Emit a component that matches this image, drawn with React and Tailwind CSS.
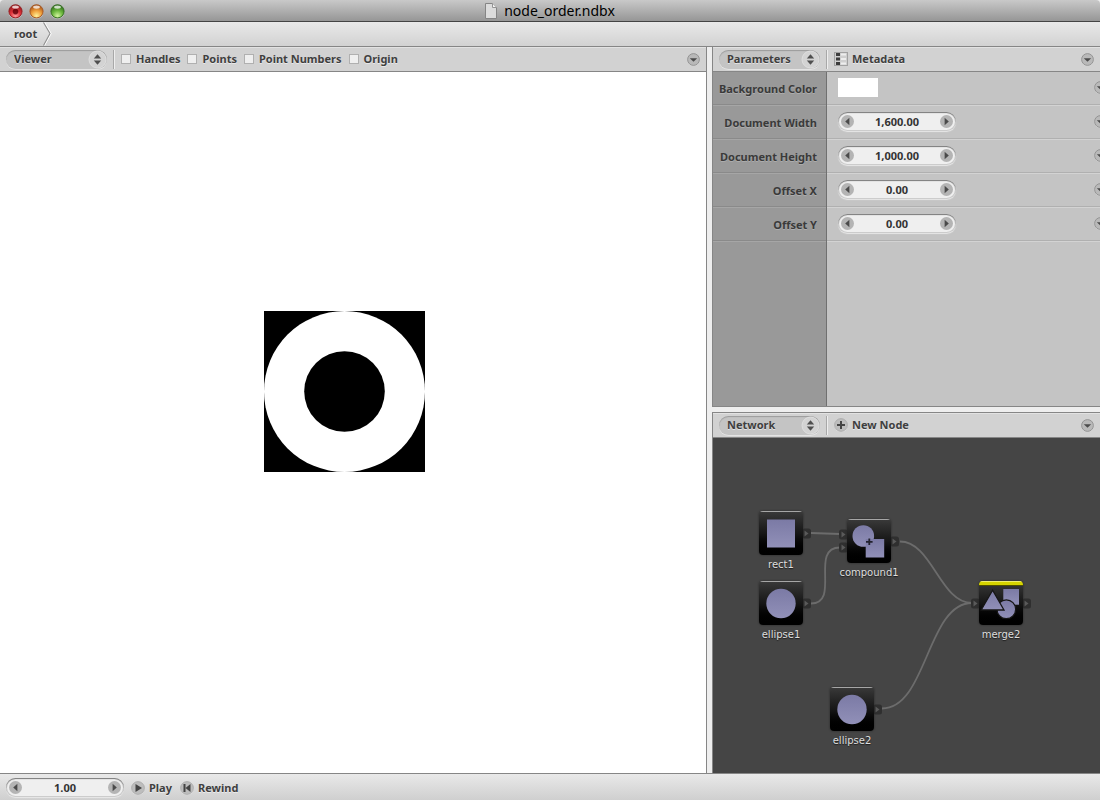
import React from "react";

const EMBOSS = "[text-shadow:0_1px_0_rgba(255,255,255,0.55)]";

function TrafficLight({ label, outer, inner, glow, dot }) {
  const id = "light-" + label;
  return (
    <button type="button" aria-label={label} className="block size-[15px]">
      <svg viewBox="0 0 15 15" className="block size-[15px]">
        <defs>
          <radialGradient id={id} cx="0.5" cy="0.85" r="0.8">
            <stop offset="0" stopColor={glow} />
            <stop offset="0.5" stopColor={inner} />
            <stop offset="1" stopColor={outer} />
          </radialGradient>
        </defs>
        <circle cx="7.5" cy="8" r="7" fill="#ffffff" opacity="0.35" />
        <circle cx="7.5" cy="7.3" r="6.6" fill={`url(#${id})`} stroke={outer} strokeWidth="0.9" />
        <ellipse cx="7.5" cy="3.1" rx="3.4" ry="1.7" fill="#ffffff" opacity="0.75" />
        {dot && <circle cx="7.5" cy="7.6" r="2.8" fill="#5e0008" opacity="0.8" />}
      </svg>
    </button>
  );
}

function PaneSelect({ label }) {
  return (
    <div className="relative flex h-[19px] w-[101px] shrink-0">
      <select
        aria-label={label + " pane"}
        className={"block h-[19px] w-full appearance-none rounded-full bg-[#c4c4c4] pr-6 pl-2 text-[11px] leading-4 font-bold text-[#3f3f3f] shadow-[inset_0_1px_1px_#9c9c9c,0_1px_0_#e4e4e4] outline-none " + EMBOSS}
      >
        <option>{label}</option>
      </select>
      <svg viewBox="0 0 19 19" className="pointer-events-none absolute top-0 right-0 size-[19px]">
        <circle cx="9.5" cy="9.5" r="8.5" fill="#d3d3d3" stroke="#dfdfdf" />
        <path d="M5.8 8.5 9.5 4.3 13.2 8.5ZM5.8 10.5 9.5 14.7 13.2 10.5Z" fill="#4f4f4f" />
      </svg>
    </div>
  );
}

function MenuButton({ label, className = "" }) {
  return (
    <button type="button" aria-label={label} className={"block size-[13px] shrink-0 " + className}>
      <svg viewBox="0 0 13 13" className="block size-[13px]">
        <circle cx="6.5" cy="7" r="6" fill="#e2e2e2" />
        <circle cx="6.5" cy="6.5" r="5.9" fill="#b9b9b9" stroke="#8e8e8e" strokeWidth="0.9" />
        <path d="M2.8 5.2H10.2L6.5 8.8Z" fill="#4c4c4c" />
      </svg>
    </button>
  );
}

function Divider() {
  return <div className="h-[19px] w-[2px] shrink-0 border-r border-[#eeeeee] bg-[#a8a8a8]" />;
}

function PaneHeader({ title, children }) {
  return (
    <header className="flex h-[25px] shrink-0 items-center border-b border-[#868686] bg-[#d2d2d2] pr-[6px] pl-[6px] shadow-[inset_0_1px_0_#e2e2e2]">
      <PaneSelect label={title} />
      <div className="w-[6px]" />
      <Divider />
      {children}
      <MenuButton label={title + " menu"} className="ml-auto" />
    </header>
  );
}

function Check({ label }) {
  const id = "show-" + label.toLowerCase().replace(" ", "-");
  return (
    <div className="flex items-center gap-[5px]">
      <input
        id={id}
        type="checkbox"
        className="size-[10px] appearance-none border border-[#b0b0b0] bg-[#efefef] checked:bg-[#555555]"
      />
      <label htmlFor={id} className={"text-[11px] leading-4 font-bold text-[#3f3f3f] " + EMBOSS}>
        {label}
      </label>
    </div>
  );
}

function StepButton({ label, left }) {
  return (
    <button type="button" aria-label={label} className="block size-[13px] shrink-0">
      <svg viewBox="0 0 13 13" className="block size-[13px]">
        <circle cx="6.5" cy="6.5" r="6.5" fill="#b4b4b4" />
        <path d={left ? "M8.4 2.8V10.2L4.2 6.5Z" : "M4.6 2.8V10.2L8.8 6.5Z"} fill="#4a4a4a" />
      </svg>
    </button>
  );
}

function NumberField({ id, label, value }) {
  return (
    <div className="flex h-[19px] w-[118px] items-center rounded-full bg-[#efefef] px-[3px] shadow-[inset_0_1px_1px_#7d7d7d,inset_0_0_0_1px_#cccccc,0_1px_1px_#e8e8e8]">
      <StepButton label={"Decrease " + label} left />
      <input
        id={id}
        aria-label={label}
        defaultValue={value}
        className="w-0 min-w-0 grow bg-transparent text-center text-[11px] leading-4 font-bold text-[#333333] outline-none"
      />
      <StepButton label={"Increase " + label} />
    </div>
  );
}

const PARAMETERS = [
  { label: "Background Color", id: "background-color", color: true },
  { label: "Document Width", id: "document-width", value: "1,600.00" },
  { label: "Document Height", id: "document-height", value: "1,000.00" },
  { label: "Offset X", id: "offset-x", value: "0.00" },
  { label: "Offset Y", id: "offset-y", value: "0.00" },
];

function ParameterRow({ label, id, value, color }) {
  return (
    <div className="flex h-[34px]">
      <div className="flex w-[113px] items-center justify-end border-b border-[#a6a6a6] pr-[9px] shadow-[inset_0_-1px_0_#8a8a8a]">
        <label
          htmlFor={id}
          className="text-[11px] leading-4 font-bold whitespace-nowrap text-[#3a3a3a] [text-shadow:0_1px_0_#adadad]"
        >
          {label}
        </label>
      </div>
      <div className="w-px bg-[#707070]" />
      <div className="flex grow items-center border-b border-[#d3d3d3] pb-[2px] pl-[11px] shadow-[inset_0_-1px_0_#b0b0b0]">
        {color ? (
          <button id={id} type="button" aria-label={label} className="h-[19px] w-10 bg-white" />
        ) : (
          <NumberField id={id} label={label} value={value} />
        )}
        <MenuButton label={label + " menu"} className="mr-[-7px] ml-auto" />
      </div>
    </div>
  );
}

function Port({ className }) {
  return (
    <svg viewBox="0 0 9 11" className={"absolute h-[11px] w-[9px] " + className}>
      <rect x="0" y="0.5" width="9" height="10" rx="2.5" fill="#2f2f2f" />
      <path d="M2.5 2.5V8.5L6.5 5.5Z" fill="#5a5a5a" />
    </svg>
  );
}

const SHAPES = {
  rect: <rect x="8" y="8.5" width="28" height="28" fill="url(#shape-fill)" />,
  ellipse: <circle cx="22" cy="22.5" r="14.7" fill="url(#shape-fill)" />,
  compound: (
    <>
      <circle cx="16.3" cy="17" r="10.8" fill="url(#shape-fill)" />
      <rect x="18.7" y="20" width="18.5" height="18.5" fill="url(#shape-fill)" />
      <path d="M22.3 19.5V26.1M19 22.8H25.6" stroke="#22222e" strokeWidth="1.8" />
    </>
  ),
  merge: (
    <>
      <rect x="24.3" y="8" width="15.7" height="15.7" fill="url(#shape-fill)" />
      <circle cx="27.3" cy="28.3" r="9.4" fill="url(#shape-fill)" stroke="#161616" strokeWidth="1.3" />
      <path d="M13.6 9.2 25 29H2.2Z" fill="url(#shape-fill)" stroke="#161616" strokeWidth="1.3" />
    </>
  ),
};

const NODES = [
  { name: "rect1", shape: "rect", left: 46, top: 73, inputs: [] },
  { name: "ellipse1", shape: "ellipse", left: 46, top: 143, inputs: [] },
  { name: "compound1", shape: "compound", left: 134, top: 81, inputs: ["top-[10px]", "top-[23px]"] },
  { name: "merge2", shape: "merge", left: 266, top: 143, inputs: ["top-[17px]"], rendered: true },
  { name: "ellipse2", shape: "ellipse", left: 117, top: 249, inputs: [] },
];

function Node({ name, shape, left, top, inputs, rendered }) {
  return (
    <div className="absolute w-11" style={{ left, top }}>
      {inputs.map((place) => (
        <Port key={place} className={"-left-2 " + place} />
      ))}
      <Port className="top-[17px] -right-2" />
      <button
        type="button"
        aria-label={name}
        className="relative block size-11 overflow-hidden rounded-[4px] bg-linear-to-b from-[#3a3a3a] via-[#171717] to-black shadow-[0_0_2px_#222222]"
      >
        <svg viewBox="0 0 44 44" className="block size-11">
          {SHAPES[shape]}
          {rendered ? (
            <>
              <rect width="44" height="4" fill="#d6d400" />
              <rect width="44" height="1" fill="#f0ee70" />
              <rect y="4" width="44" height="1" fill="#504f00" />
            </>
          ) : (
            <rect x="1" width="42" height="1" fill="#a6a6a6" />
          )}
        </svg>
      </button>
      <div className="mt-1 flex justify-center">
        <span className="font-['DejaVu_Sans','Noto_Sans',sans-serif] text-[10px] leading-3 whitespace-nowrap text-[#dedede] [text-shadow:0_1px_1px_#1c1c1c]">
          {name}
        </span>
      </div>
    </div>
  );
}

function Network() {
  return (
    <div className="relative grow overflow-hidden bg-[#454545]">
      <svg viewBox="0 0 387 335" className="absolute top-0 left-0 h-[335px] w-[387px]">
        <defs>
          <linearGradient id="shape-fill" x1="0" y1="0" x2="0" y2="1">
            <stop offset="0" stopColor="#7b7aa5" />
            <stop offset="1" stopColor="#9190b8" />
          </linearGradient>
        </defs>
        <g fill="none" stroke="#6c6c6c" strokeWidth="1.8">
          <path d="M98 95 127 96" />
          <path d="M98 165.5C128 165.5 96 109.5 127 109.5" />
          <path d="M187 103.5C219 103.5 227 165 259 165" />
          <path d="M169 270.5C214 270.5 214 165 259 165" />
        </g>
      </svg>
      {NODES.map((node) => (
        <Node key={node.name} {...node} />
      ))}
    </div>
  );
}

function ToolButton({ children, label }) {
  return (
    <button type="button" className={"flex items-center gap-1 text-[11px] leading-4 font-bold text-[#3f3f3f] " + EMBOSS}>
      <svg viewBox="0 0 14 14" className="block size-[14px]">
        {children}
      </svg>
      {label}
    </button>
  );
}

const disc = (
  <>
    <circle cx="7" cy="7.6" r="6.4" fill="#e6e6e6" />
    <circle cx="7" cy="7" r="6.4" fill="#bdbdbd" stroke="#a3a3a3" strokeWidth="0.7" />
  </>
);

export default function App() {
  return (
    <div className="flex h-screen flex-col overflow-hidden bg-[#eeeeee] font-['Noto_Sans','Open_Sans',sans-serif]">
      <div className="relative flex h-[22px] shrink-0 items-center justify-center rounded-t-[4px] border-b border-[#444444] bg-linear-to-b from-[#c9c9c9] to-[#969696]">
        <div className="absolute top-1 left-2 flex gap-[6px]">
          <TrafficLight label="Close" outer="#8e1a1c" inner="#e0323a" glow="#ff9a9a" dot />
          <TrafficLight label="Minimize" outer="#a2501a" inner="#f0a03c" glow="#fff39a" />
          <TrafficLight label="Zoom" outer="#2f6a1c" inner="#6cb83e" glow="#d4f5a0" />
        </div>
        <svg viewBox="0 0 12 16" className="mr-[7px] block h-4 w-3">
          <path d="M0.5 0.5H7.5L11.5 4.5V15.5H0.5Z" fill="#dcdcdc" stroke="#858585" />
          <path d="M7.5 0.5V4.5H11.5" fill="#f2f2f2" stroke="#949494" />
        </svg>
        <h1 className="text-sm leading-5 text-black">node_order.ndbx</h1>
      </div>

      <nav className="flex h-[25px] shrink-0 items-center border-b border-[#868686] bg-linear-to-b from-[#e9e9e9] to-[#d2d2d2] pl-[14px]">
        <a href="#root" className={"text-[11px] leading-4 font-bold text-[#3f3f3f] " + EMBOSS}>
          root
        </a>
        <svg viewBox="0 0 9 24" className="ml-[6px] block h-6 w-[9px]">
          <path d="M1.5 0.5 8 11.5 1.5 23.5" fill="none" stroke="#ffffff" strokeWidth="1.2" />
          <path d="M0.5 0.5 7 11.5 0.5 23.5" fill="none" stroke="#8f8f8f" strokeWidth="1.1" />
        </svg>
      </nav>

      <main className="flex min-h-0 grow">
        <section className="flex min-w-0 grow flex-col border-r border-[#868686]">
          <PaneHeader title="Viewer">
            <div className="flex items-center gap-[7px] pl-[6px]">
              <Check label="Handles" />
              <Check label="Points" />
              <Check label="Point Numbers" />
              <Check label="Origin" />
            </div>
          </PaneHeader>
          <div className="relative grow overflow-hidden bg-white">
            <svg viewBox="0 0 161 161" className="absolute top-[239px] left-[264px] size-[161px]">
              <rect width="161" height="161" fill="#000000" />
              <circle cx="80.5" cy="80.5" r="80.5" fill="#ffffff" />
              <circle cx="80.5" cy="80.5" r="40.3" fill="#000000" />
            </svg>
          </div>
        </section>

        <div className="flex w-[393px] shrink-0 flex-col pl-[5px]">
          <section className="flex h-[360px] shrink-0 flex-col border-b border-l border-[#868686]">
            <PaneHeader title="Parameters">
              <div className="pl-[6px]">
                <ToolButton label="Metadata">
                  <rect x="0.5" y="0.5" width="13" height="13" fill="#cfcfcf" stroke="#a2a2a2" />
                  <path d="M2 1H6V4H2ZM2 5.5H6V8.5H2ZM2 10H6V13H2Z" fill="#3c3c3c" />
                  <path d="M7 2.5H12M7 7H12M7 11.5H12" stroke="#eeeeee" strokeWidth="2" />
                </ToolButton>
              </div>
            </PaneHeader>
            <div className="flex grow flex-col overflow-hidden bg-[linear-gradient(to_right,#999999_113px,#707070_113px,#707070_114px,#c4c4c4_114px)]">
              {PARAMETERS.map((parameter) => (
                <ParameterRow key={parameter.id} {...parameter} />
              ))}
            </div>
          </section>
          <section className="mt-[5px] flex grow flex-col border-t border-l border-[#868686]">
            <PaneHeader title="Network">
              <div className="pl-[6px]">
                <ToolButton label="New Node">
                  {disc}
                  <path d="M7 3V11M3 7H11" stroke="#444444" strokeWidth="2" />
                </ToolButton>
              </div>
            </PaneHeader>
            <Network />
          </section>
        </div>
      </main>

      <footer className="flex h-[27px] shrink-0 items-center border-t border-[#868686] bg-linear-to-b from-[#e9e9e9] to-[#cfcfcf] pt-px pl-[6px]">
        <NumberField id="frame" label="Frame" value="1.00" />
        <div className="flex gap-2 pl-[7px]">
          <ToolButton label="Play">
            {disc}
            <path d="M4.5 3V11L11 7Z" fill="#444444" />
          </ToolButton>
          <ToolButton label="Rewind">
            {disc}
            <path d="M3.5 3H5.5V11H3.5ZM10.5 3V11L5.5 7Z" fill="#444444" />
          </ToolButton>
        </div>
      </footer>
    </div>
  );
}
